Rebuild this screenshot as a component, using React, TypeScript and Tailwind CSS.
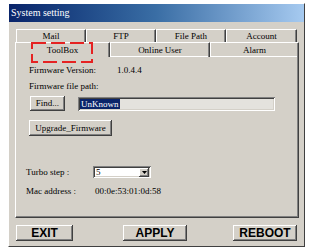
import React from "react";

const raised =
  "shadow-[inset_-1px_-1px_0_#404040,inset_1px_1px_0_#ffffff,inset_-2px_-2px_0_#808080]";
const sunken =
  "shadow-[inset_1px_1px_0_#808080,inset_-1px_-1px_0_#ffffff,inset_2px_2px_0_#404040,inset_-2px_-2px_0_#d4d0c8]";

function Tab({ w, label, h, bottomLine }: { w: number; label: string; h: string; bottomLine?: boolean }) {
  return (
    <div
      className={`${h} flex items-center justify-center border-t border-l border-white border-r border-r-[#404040] ${
        bottomLine
          ? "shadow-[inset_-1px_0_0_#808080,inset_0_-1px_0_#ffffff]"
          : "shadow-[inset_-1px_0_0_#808080]"
      }`}
      style={{ width: w }}
    >
      <span className="text-[9px] leading-none">{label}</span>
    </div>
  );
}

export default function App() {
  return (
    <div
      className="relative w-[310px] h-[249px] bg-white pt-[3px] pl-[8px] text-black"
      style={{ fontFamily: '"Liberation Serif", "Times New Roman", serif' }}
    >
      <div className="w-[297px] h-[244px] bg-[#d4d0c8] border border-t-white border-l-white border-r-[#404040] border-b-[#404040] flex flex-col">
        {/* title bar */}
        <div className="h-[18px] bg-gradient-to-r from-[#0a246a] via-[#3a6ea5] to-[#a6caf0] flex items-center pl-[2px]">
          <span className="text-white text-[10px] leading-none">System setting</span>
        </div>

        {/* tabs */}
        <div className="mt-[7px] pl-[6px] flex flex-col">
          <div className="flex pl-[1px]">
            <Tab w={70} h="h-[13px]" label="Mail" />
            <Tab w={70} h="h-[13px]" label="FTP" />
            <Tab w={70} h="h-[13px]" label="File Path" />
            <Tab w={71} h="h-[13px]" label="Account" />
          </div>
          <div className="flex">
            <Tab w={95} h="h-[15px]" label="ToolBox" />
            <Tab w={100} h="h-[15px]" label="Online User" bottomLine />
            <Tab w={89} h="h-[15px]" label="Alarm" bottomLine />
          </div>

          {/* panel */}
          <div className="w-[284px] h-[161px] border-l border-white border-r border-r-[#404040] border-b border-b-[#404040] shadow-[inset_-1px_-1px_0_#808080] flex flex-col pt-[8px] text-[9px] leading-[11px]">
            <div className="flex pl-[13px]">
              <span className="w-[88px]">Firmware Version:</span>
              <span>1.0.4.4</span>
            </div>
            <div className="flex pl-[13px] mt-[5px]">
              <span>Firmware file path:</span>
            </div>
            <div className="flex items-start pl-[14px] mt-[4px]">
              <div className={`w-[35px] h-[15px] ${raised} flex items-center justify-center`}>
                <span className="leading-none">Find...</span>
              </div>
              <div className={`ml-[13px] mt-[1px] w-[197px] h-[14px] bg-[#e4e2dd] ${sunken} flex items-center pl-[2px]`}>
                <span className="bg-[#0a246a] text-white px-[1px] leading-[10px]">UnKnown</span>
              </div>
            </div>
            <div className="flex pl-[13px] mt-[9px]">
              <div className={`w-[83px] h-[16px] ${raised} flex items-center justify-center`}>
                <span className="leading-none">Upgrade_Firmware</span>
              </div>
            </div>
            <div className="flex items-center pl-[10px] mt-[30px] h-[12px]">
              <span className="w-[67px]">Turbo step :</span>
              <div className={`w-[58px] h-[12px] bg-white ${sunken} flex items-center justify-between pl-[3px] pr-[2px]`}>
                <span className="leading-none">5</span>
                <div className={`w-[10px] h-[9px] bg-[#d4d0c8] ${raised} flex items-center justify-center`}>
                  <svg width="5" height="3" viewBox="0 0 5 3">
                    <path d="M0 0H5L2.5 3Z" fill="#000" />
                  </svg>
                </div>
              </div>
            </div>
            <div className="flex pl-[10px] mt-[8px]">
              <span className="w-[69px]">Mac address :</span>
              <span>00:0e:53:01:0d:58</span>
            </div>
          </div>
        </div>

        {/* bottom buttons */}
        <div
          className="flex mt-[7px] pl-[7px] text-[12px] font-bold"
          style={{ fontFamily: '"Liberation Sans", Arial, sans-serif' }}
        >
          <div className={`w-[57px] h-[16px] ${raised} flex items-center justify-center`}>
            <span className="leading-none">EXIT</span>
          </div>
          <div className={`ml-[50px] w-[64px] h-[16px] ${raised} flex items-center justify-center`}>
            <span className="leading-none">APPLY</span>
          </div>
          <div className={`ml-[46px] w-[64px] h-[16px] ${raised} flex items-center justify-center`}>
            <span className="leading-none">REBOOT</span>
          </div>
        </div>
      </div>

      {/* red dashed annotation */}
      <svg className="absolute left-[31px] top-[42px]" width="62" height="21" viewBox="0 0 62 21">
        <rect x="1" y="1" width="60" height="19" fill="none" stroke="#e52222" strokeWidth="2" strokeDasharray="14 5" />
      </svg>
    </div>
  );
}
